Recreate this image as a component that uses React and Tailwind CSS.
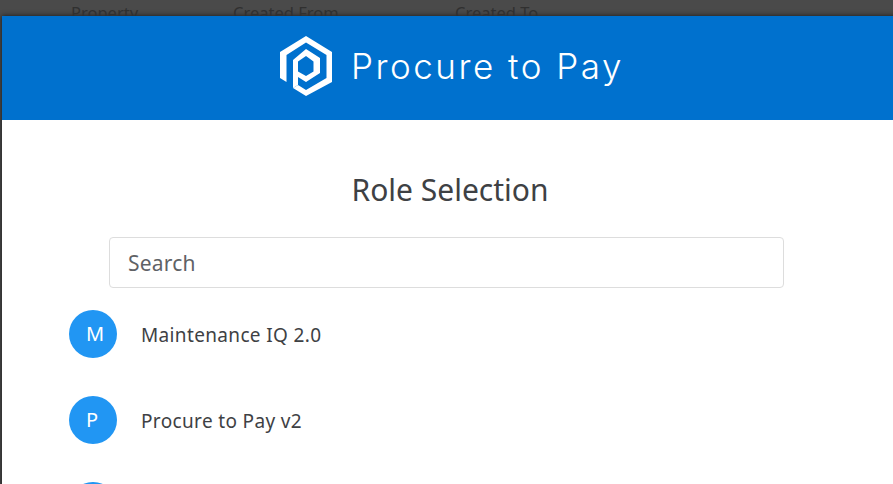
const roles = [
  { letter: "M", name: "Maintenance IQ 2.0" },
  { letter: "P", name: "Procure to Pay v2" },
  { letter: "R", name: "" },
]

const Logo = () => (
  <svg width="54" height="62" viewBox="279 35 54 62" fill="#fff">
    <path d="M280 78V52L306 36L332 52V82L306 96L293 88L298 85L306 90L326.5 78V55L306 42.5L286.5 55V82Z" />
    <path
      fillRule="evenodd"
      d="M293 88V60L306 49L320 58V73L306 82L298 77V85ZM306 56L298 61.5V71.5L306 76L313.5 71.5V61.5Z"
    />
  </svg>
)

const App = () => {
  return (
    <div className="h-[484px] overflow-hidden bg-[#4a4a4a] font-['Noto_Sans',sans-serif]">
      <div className="h-4 overflow-hidden flex text-[#303030] text-[16.5px] leading-none pt-[5px]">
        <span className="ml-[71px] w-[162px]">Property</span>
        <span className="w-[222px]">Created From</span>
        <span>Created To</span>
      </div>

      <div className="ml-[2px] w-[896px] bg-white shadow-[0_0_5px_rgba(0,0,0,0.7)]">
        <div className="h-[104px] pb-1 pl-[3px] bg-[#0071ce] flex items-center justify-center gap-[18px]">
          <Logo />
          <span className="text-white text-[35px] tracking-[2.5px] font-['Inter',sans-serif] font-light">
            Procure to Pay
          </span>
        </div>

        <div className="pt-[50px]">
          <h1 className="text-center text-[#3e4144] text-[30px] leading-[40px]">Role Selection</h1>

          <input
            placeholder="Search"
            className="block mt-[27px] ml-[107px] w-[675px] h-[51px] px-[18px] border border-[#dddddd] rounded text-[21px] tracking-[0.2px] placeholder:text-[#5f6266] outline-none"
          />

          <ul className="mt-[22px] ml-[67px] flex flex-col gap-[38px]">
            {roles.map((role) => (
              <li key={role.letter} className="flex items-center gap-6">
                <div className="w-12 h-12 pl-[17px] rounded-full bg-[#2196f3] text-white text-[20px] flex items-center">
                  {role.letter}
                </div>
                <span className="text-[#3e4144] text-[19px] tracking-[0.35px] pt-[2px]">{role.name}</span>
              </li>
            ))}
          </ul>
        </div>
      </div>
    </div>
  )
}

export default App
